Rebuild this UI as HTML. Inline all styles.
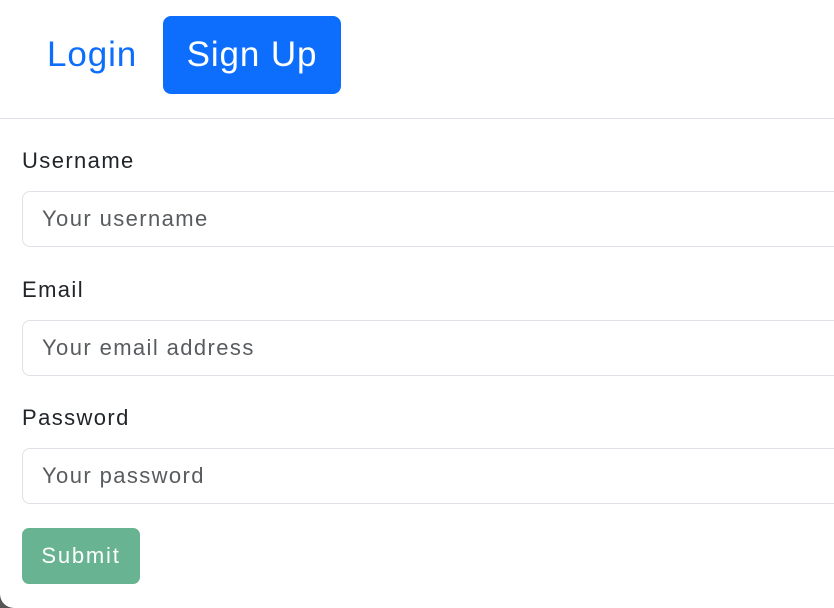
<!DOCTYPE html>
<html><head><style>
html,body{margin:0;padding:0;width:834px;height:608px;overflow:hidden;background:#555;}
.page{position:absolute;left:0;top:0;width:834px;height:608px;background:#fff;border-bottom-left-radius:14px;font-family:"Liberation Sans",sans-serif;}
.login{position:absolute;left:47px;top:33px;font-size:35px;letter-spacing:0.9px;color:#0d6efd;line-height:44px;}
.signup{position:absolute;left:163px;top:16px;width:178px;height:78px;background:#0d6efd;border-radius:8px;color:#fff;font-size:35px;letter-spacing:0.9px;line-height:78px;text-align:center;}
.hr{position:absolute;left:0;top:118px;width:834px;height:1px;background:#dee2e6;}
.lbl{position:absolute;left:22px;font-size:22px;letter-spacing:1.4px;color:#212529;line-height:24px;}
.inp{position:absolute;left:22px;width:830px;height:54px;border:1px solid #dee2e6;border-radius:8px;box-sizing:content-box;}
.inp span{position:absolute;left:19px;top:0;line-height:54px;font-size:22px;letter-spacing:1.4px;color:#595c5f;}
.btn{position:absolute;left:22px;top:528px;width:118px;height:56px;background:#68b391;border-radius:7px;color:#fff;font-size:22px;letter-spacing:1.8px;line-height:56px;text-align:center;}
</style></head><body><div class="page">
<div class="login">Login</div>
<div class="signup">Sign Up</div>
<div class="hr"></div>
<div class="lbl" style="top:149px">Username</div>
<div class="inp" style="top:191px"><span>Your username</span></div>
<div class="lbl" style="top:278px">Email</div>
<div class="inp" style="top:320px"><span>Your email address</span></div>
<div class="lbl" style="top:406px">Password</div>
<div class="inp" style="top:448px"><span>Your password</span></div>
<div class="btn">Submit</div>
</div></body></html>
